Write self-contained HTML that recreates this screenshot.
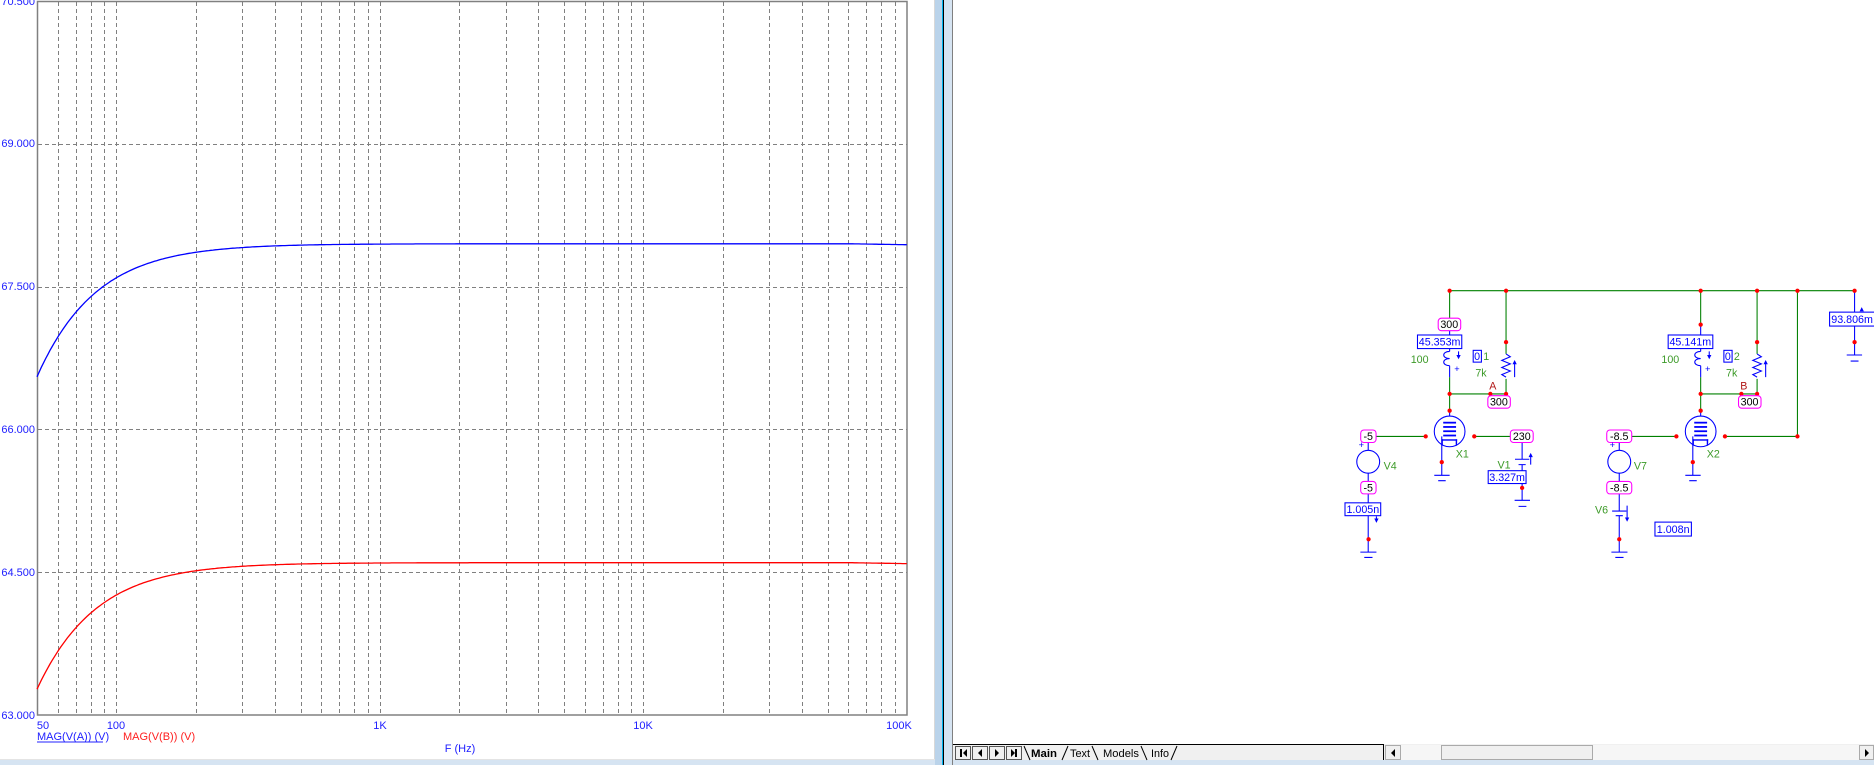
<!DOCTYPE html>
<html><head><meta charset="utf-8"><style>
html,body{margin:0;padding:0;width:1874px;height:765px;overflow:hidden;background:#fff;font-family:"Liberation Sans",sans-serif}
svg{position:absolute;left:0;top:0}
</style></head><body>
<svg width="1874" height="765" viewBox="0 0 1874 765" xmlns="http://www.w3.org/2000/svg" font-family="Liberation Sans, sans-serif">
<rect width="1874" height="765" fill="#fff"/>
<g id="grid" stroke="#808080" stroke-width="1" stroke-dasharray="4,3"></g>
<rect x="37.5" y="1.5" width="869.5" height="713.5" fill="none" stroke="#808080" stroke-width="1.5"/>
<g font-size="11" fill="#2020ff" text-anchor="end">
<text x="35" y="5">70.500</text>
<text x="35" y="147">69.000</text>
<text x="35" y="290">67.500</text>
<text x="35" y="433">66.000</text>
<text x="35" y="576">64.500</text>
<text x="35" y="719">63.000</text>
</g>
<g font-size="11" fill="#2020ff" text-anchor="middle">
<text x="43" y="729">50</text>
<text x="116" y="729">100</text>
<text x="380" y="729">1K</text>
<text x="643" y="729">10K</text>
<text x="899" y="729">100K</text>
<text x="460" y="752">F (Hz)</text>
</g>
<text x="37" y="740" font-size="11" fill="#2020ff">MAG(V(A)) (V)</text>
<line x1="37" y1="742" x2="103" y2="742" stroke="#2020ff"/>
<text x="123" y="740" font-size="11" fill="#ff2020">MAG(V(B)) (V)</text>
<path id="cb" fill="none" stroke="#0000ff" stroke-width="1.3"/>
<path id="cr" fill="none" stroke="#ff0000" stroke-width="1.3"/>
<line x1="934.5" y1="0" x2="934.5" y2="765" stroke="#d8d8d8"/>
<rect x="935" y="0" width="7" height="765" fill="#bad3ea"/>
<rect x="942" y="0" width="1" height="765" fill="#00b4f0"/>
<rect x="943" y="0" width="1" height="765" fill="#000"/>
<rect x="944" y="0" width="8" height="765" fill="#d6e4f2"/>
<line x1="952.5" y1="0" x2="952.5" y2="765" stroke="#808080"/>
<rect x="0" y="760" width="935" height="5" fill="#d6e4f2"/>
<line x1="0" y1="759.5" x2="935" y2="759.5" stroke="#e4e4e4"/>
<rect x="953" y="744" width="921" height="16" fill="#f0f0f0"/>
<rect x="953" y="760" width="921" height="5" fill="#d6e4f2"/>
<line x1="953" y1="744.5" x2="1384" y2="744.5" stroke="#000"/>
<g stroke="#555" fill="#f0f0f0">
<rect x="955.5" y="746.5" width="15" height="13"/><rect x="972.5" y="746.5" width="15" height="13"/>
<rect x="989.5" y="746.5" width="15" height="13"/><rect x="1006.5" y="746.5" width="15" height="13"/>
</g>
<g fill="#000">
<rect x="960" y="749" width="2" height="8"/><path d="M967 749v8l-4-4z"/>
<path d="M982 749v8l-4-4z"/><path d="M995 749v8l4-4z"/>
<path d="M1011 749v8l4-4z"/><rect x="1015" y="749" width="2" height="8"/>
</g>
<path d="M1024 746 L1030 760 M1062 760 L1068 746 M1092 746 L1098 760 M1141 746 L1147 760 M1171 760 L1177 746" stroke="#000" fill="none"/>
<text x="1031" y="757" font-size="11" font-weight="bold" textLength="26" lengthAdjust="spacingAndGlyphs">Main</text>
<text x="1070" y="757" font-size="11" textLength="20" lengthAdjust="spacingAndGlyphs">Text</text>
<text x="1103" y="757" font-size="11" textLength="36" lengthAdjust="spacingAndGlyphs">Models</text>
<text x="1151" y="757" font-size="11" textLength="18" lengthAdjust="spacingAndGlyphs">Info</text>
<line x1="1383.5" y1="744" x2="1383.5" y2="760" stroke="#000"/>
<rect x="1385.5" y="745.5" width="15" height="14" fill="#f0f0f0" stroke="#aaa"/>
<path d="M1395 749v8l-4-4z" fill="#000"/>
<rect x="1401" y="745" width="458" height="15" fill="#f6f6f6"/>
<rect x="1441.5" y="745.5" width="151" height="14" fill="#f0f0f0" stroke="#aaa"/>
<rect x="1859.5" y="745.5" width="14" height="14" fill="#f0f0f0" stroke="#aaa"/>
<path d="M1865 749v8l4-4z" fill="#000"/>
<g transform="translate(1320,270) scale(0.3571)" font-size="30">
<g stroke="#008000" stroke-width="3" fill="none">
<path d="M363 58H1497"/>
<path d="M363 58V135M363 300V394M363 347H521M521 58V235M521 305V347"/>
<path d="M157 466H296M432 466H533"/>
<path d="M1066 58V153M1066 300V394M1066 347H1224M1224 58V235M1224 305V347"/>
<path d="M873 466H998M1134 466H1337V58"/>
</g>
<g stroke="#0000ff" stroke-width="3" fill="none">
<path d="M363 170V182M363 220V228 M363 228c-22 0 -22 20 0 20 M363 248 c-22 0 -22 20 0 20 M363 268V300"/>
<path d="M1066 153V182M1066 220V228 M1066 228c-22 0 -22 20 0 20 M1066 248 c-22 0 -22 20 0 20 M1066 268V300"/>
<path d="M521 235l12 8-24 10 24 10-24 10 24 10-24 10 12 7"/>
<path d="M1224 235l12 8-24 10 24 10-24 10 24 10-24 10 12 7"/>
<path d="M545 300V258M1248 300V258"/>
<circle cx="363" cy="452" r="43"/><circle cx="1066" cy="452" r="43"/>
<path d="M341 466V575M320 575H363M331 590H352"/>
<path d="M1044 466V575M1023 575H1066M1034 590H1055"/>
<path d="M135 483V505M135 569V592M135 627V652M135 688V790M113 790H158M124 805H147"/>
<circle cx="135" cy="537" r="32"/>
<path d="M838 483V505M838 569V592M838 627V675M818 675H858M828 688H848M838 688V790M816 790H861M827 805H850"/>
<circle cx="838" cy="537" r="32"/>
<path d="M566 483V530M546 530H586M556 545H576M566 545V562M566 598V645M545 645H588M556 662H578"/>
<path d="M590 545V518M158 690V705M860 660V700M1497 58V118M1497 157V238M1475 238H1518M1486 255H1508"/>
<path d="M388 228V245M1090 228V245"/>
<path d="M363 394V409M1066 394V409"/>
</g>
<g fill="#0000ff">
<path d="M590 512l-6 12h12z M545 252l-6 12h12z M1248 252l-6 12h12z M1517 104l-6 12h12z"/>
<path d="M158 708l-6-12h12z M860 705l-6-12h12z M388 250l-6-12h12z M1090 250l-6-12h12z"/>
<rect x="345" y="425" width="36" height="5"/><rect x="345" y="437" width="36" height="5"/><rect x="345" y="449" width="36" height="5"/><rect x="345" y="461" width="36" height="5"/>
<rect x="340" y="474" width="44" height="4"/><rect x="340" y="474" width="4" height="18"/><rect x="380" y="474" width="4" height="18"/>
<rect x="1048" y="425" width="36" height="5"/><rect x="1048" y="437" width="36" height="5"/><rect x="1048" y="449" width="36" height="5"/><rect x="1048" y="461" width="36" height="5"/>
<rect x="1043" y="474" width="44" height="4"/><rect x="1043" y="474" width="4" height="18"/><rect x="1083" y="474" width="4" height="18"/>
</g>
<g fill="#ff0000">
<circle cx="363" cy="58" r="6"/><circle cx="521" cy="58" r="6"/><circle cx="1066" cy="58" r="6"/><circle cx="1224" cy="58" r="6"/><circle cx="1337" cy="58" r="6"/><circle cx="1497" cy="58" r="6"/>
<circle cx="521" cy="202" r="6"/><circle cx="1224" cy="202" r="6"/><circle cx="1066" cy="153" r="6"/><circle cx="1497" cy="202" r="6"/>
<circle cx="363" cy="347" r="6"/><circle cx="477" cy="347" r="6"/><circle cx="521" cy="347" r="6"/>
<circle cx="1066" cy="347" r="6"/><circle cx="1180" cy="347" r="6"/><circle cx="1224" cy="347" r="6"/>
<circle cx="363" cy="394" r="6"/><circle cx="1066" cy="394" r="6"/>
<circle cx="296" cy="466" r="6"/><circle cx="432" cy="466" r="6"/><circle cx="998" cy="466" r="6"/><circle cx="1134" cy="466" r="6"/><circle cx="1337" cy="466" r="6"/>
<circle cx="341" cy="538" r="6"/><circle cx="1044" cy="538" r="6"/>
<circle cx="566" cy="610" r="6"/><circle cx="136" cy="754" r="6"/><circle cx="838" cy="754" r="6"/>
</g>
<g fill="#fff" stroke="#ff00ff" stroke-width="3">
<rect x="331" y="135" width="63" height="35" rx="9"/><rect x="470" y="352" width="63" height="35" rx="9"/><rect x="1172" y="352" width="63" height="35" rx="9"/>
<rect x="114" y="448" width="43" height="35" rx="9"/><rect x="533" y="448" width="64" height="35" rx="9"/>
<rect x="114" y="592" width="43" height="35" rx="9"/><rect x="803" y="448" width="70" height="35" rx="9"/><rect x="803" y="592" width="70" height="35" rx="9"/>
</g>
<g fill="#fff" stroke="#0000ff" stroke-width="3">
<rect x="273" y="182" width="124" height="38"/><rect x="975" y="182" width="125" height="38"/>
<rect x="471" y="562" width="106" height="36"/><rect x="70" y="652" width="100" height="36"/>
<rect x="938" y="706" width="102" height="39"/><rect x="1427" y="118" width="126" height="39"/>
<rect x="429" y="225" width="23" height="33"/><rect x="1131" y="225" width="23" height="33"/>
</g>
<g fill="#000" text-anchor="middle">
<text x="362" y="163">300</text><text x="501" y="380">300</text><text x="1203" y="380">300</text>
<text x="135" y="476">-5</text><text x="565" y="476">230</text><text x="135" y="620">-5</text>
<text x="838" y="476">-8.5</text><text x="838" y="620">-8.5</text>
</g>
<g fill="#0000ff" text-anchor="middle">
<text x="335" y="212">45.353m</text><text x="1037" y="212">45.141m</text>
<text x="524" y="591">3.327m</text><text x="120" y="681">1.005n</text>
<text x="989" y="737">1.008n</text><text x="1490" y="149">93.806m</text>
<text x="440" y="252">0</text><text x="1142" y="252">0</text>
</g>
<g fill="#0000ff" font-size="26"><text x="376" y="285">+</text><text x="1078" y="285">+</text><text x="108" y="498">+</text><text x="811" y="498">+</text></g>
<g fill="#3c9a28">
<text x="457" y="252">1</text><text x="1159" y="252">2</text>
<text x="254" y="260">100</text><text x="956" y="260">100</text>
<text x="435" y="298">7k</text><text x="1137" y="298">7k</text>
<text x="380" y="525">X1</text><text x="1083" y="525">X2</text>
<text x="178" y="558">V4</text><text x="879" y="558">V7</text>
<text x="497" y="556">V1</text><text x="770" y="682">V6</text>
</g>
<g fill="#b01818"><text x="474" y="335">A</text><text x="1177" y="335">B</text></g>
</g>
<script>
(function(){
var NS="http://www.w3.org/2000/svg";
function X(f){return 37+263.5*Math.log10(f/50);}
function Y(v){return 1+(70.5-v)/7.5*714;}
var g=document.getElementById('grid');
function ln(x1,y1,x2,y2){var l=document.createElementNS(NS,'line');l.setAttribute('x1',x1);l.setAttribute('y1',y1);l.setAttribute('x2',x2);l.setAttribute('y2',y2);g.appendChild(l);}
[10,100,1000,10000].forEach(function(d){for(var k=1;k<10;k++){var f=d*k;if(f<=50||f>=100000)continue;var x=Math.round(X(f))+0.5;ln(x,2,x,715);}});
[69,67.5,66,64.5].forEach(function(v){var y=Math.round(Y(v))+0.5;ln(38,y,907,y);});
function curve(id,vm){var d='';for(var i=0;i<=400;i++){var f=50*Math.pow(2000,i/400);var v=vm*f/Math.sqrt(f*f+10.3*10.3);if(f>60000)v-=0.01*(Math.log10(f/60000)/Math.log10(100000/60000));d+=(i?'L':'M')+X(f).toFixed(1)+' '+Y(v).toFixed(1);}document.getElementById(id).setAttribute('d',d);}
curve('cb',67.95);curve('cr',64.6);
})();
</script>
</svg>
</body></html>
